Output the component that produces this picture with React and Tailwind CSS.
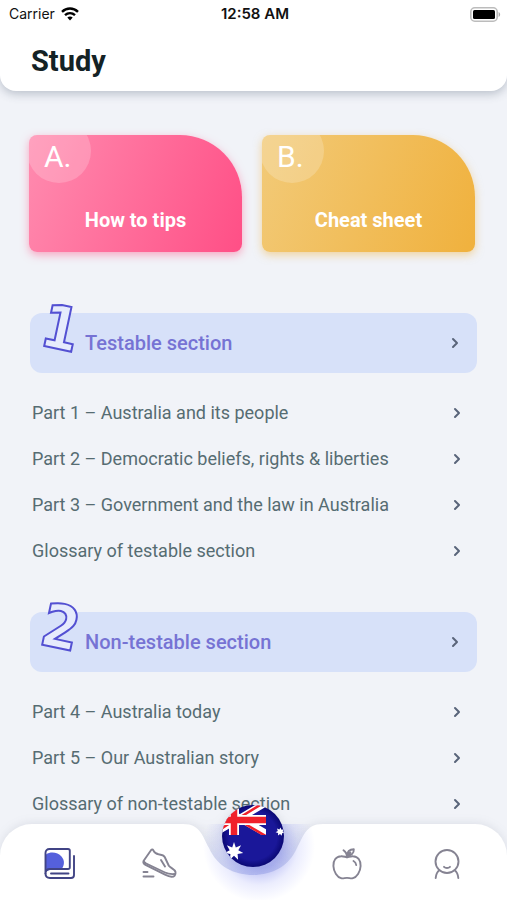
import React from "react";
import { ChevronRight } from "lucide-react";

const sections = [
  {
    number: "1",
    title: "Testable section",
    items: [
      "Part 1 – Australia and its people",
      "Part 2 – Democratic beliefs, rights & liberties",
      "Part 3 – Government and the law in Australia",
      "Glossary of testable section",
    ],
  },
  {
    number: "2",
    title: "Non-testable section",
    items: [
      "Part 4 – Australia today",
      "Part 5 – Our Australian story",
      "Glossary of non-testable section",
    ],
  },
];

function StatusBar() {
  return (
    <div className="grid h-7 grid-cols-3 items-center pl-[9px] pr-[6px] font-['Inter',sans-serif] text-[14px] leading-5 text-[#111]">
      <div className="flex items-center gap-[6px]">
        <span>Carrier</span>
        <svg width="18" height="14" viewBox="0 0 18 14" fill="none" stroke="#000" strokeWidth="2.4" aria-hidden="true">
          <path d="M1 4.8C5.5.4 12.5.4 17 4.8" />
          <path d="M4 8.2c2.9-2.7 7.100-2.700 10 0" />
          <path d="M6.300 10.500c1.500-1.500 3.900-1.500 5.400 0L9 13.400Z" fill="#000" stroke="none" />
        </svg>
      </div>
      <span className="text-center text-[15px] font-semibold">12:58 AM</span>
      <svg className="justify-self-end" width="31" height="15" viewBox="0 0 31 15" aria-hidden="true">
        <rect x=".8" y=".8" width="26.400" height="13.400" rx="4" fill="#fff" stroke="#bcbcbc" strokeWidth="1.600" />
        <rect x="3" y="3" width="22" height="9" rx="1.500" fill="#000" />
        <path d="M28.600 5v5c2-.8 2-4.200 0-5Z" fill="#aaa" />
      </svg>
    </div>
  );
}

function TopicCard({ letter, title, tone }) {
  return (
    <button
      type="button"
      className={`relative h-[117px] flex-1 overflow-visible rounded-lg rounded-tr-[62px] text-white ${tone}`}
    >
      <span className="absolute inset-0 overflow-hidden rounded-lg rounded-tr-[62px]">
        <span className="absolute -top-4 -left-[2px] size-16 rounded-full bg-white/20" />
      </span>
      <span className="absolute top-1 left-[15px] text-[30px] leading-9">{letter}</span>
      <span className="relative block pt-[52px] text-[20px] leading-6 font-bold">{title}</span>
    </button>
  );
}

function Section({ number, title, items }) {
  return (
    <section className="flex flex-col gap-[17px]">
      <h2>
        <button
          type="button"
          className="relative flex h-[60px] w-full items-center justify-between rounded-xl bg-[#d7e1f9] pr-[14px] pl-[55px] text-[20px] leading-6 font-medium text-[#7673d4]"
        >
          <span
            aria-hidden="true"
            className="absolute -top-5 left-3 rotate-12 font-['DejaVu_Sans_Condensed','DejaVu_Sans',sans-serif] text-[60px] leading-[70px] font-bold text-[#e6ebfc] [-webkit-text-stroke:2px_#5350d2]"
          >
            {number}
          </span>
          <span>{title}</span>
          <ChevronRight size={16} strokeWidth={3} className="text-[#59647a]" />
        </button>
      </h2>
      <ul>
        {items.map((item) => (
          <li key={item}>
            <a
              href="#"
              className="flex h-[46px] items-center justify-between pr-3 pl-[2px] text-[18px] leading-6 text-[#566c72]"
            >
              <span>{item}</span>
              <ChevronRight size={16} strokeWidth={3} className="text-[#59647a]" />
            </a>
          </li>
        ))}
      </ul>
    </section>
  );
}

function BookIcon() {
  return (
    <svg width="32" height="32" viewBox="0 0 32 32" fill="none" stroke="#414485" strokeWidth="1.900" strokeLinecap="round" strokeLinejoin="round" aria-hidden="true">
      <path d="M2 6.500C7 3 14 4.500 17.500 8.500c3.700 4.300 3 9.500-.5 13.500H7c-2 0-3.500.5-5 2Z" fill="#5560dc" stroke="none" />
      <path d="M5.500 1H24c1.200 0 1.800.6 1.800 1.800v16.400c0 1.200-.6 1.800-1.800 1.800H6c-3 0-4.500 1.800-4.500 4.500V5C1.500 2.500 3 1 5.500 1Z" />
      <path d="M1.500 25.500C1.500 28.200 3.200 30 6 30h21c2 0 3-1 3-3V8M7 25.500h17.500" />
    </svg>
  );
}

function ShoeIcon() {
  return (
    <svg width="36" height="32" viewBox="0 0 36 32" fill="none" stroke="#858392" strokeWidth="1.900" strokeLinecap="round" strokeLinejoin="round" aria-hidden="true">
      <path d="M2.500 13 10 2.200c.8-1 1.700-1 2.300.1 1 2 2.700 3.500 5.200 4 2.500.4 5 .4 6.200 2.700l4 8.500c1.200 2.200 6.300 3.700 6.800 6.500.5 3-1.300 4.800-4 4.700-2.500 0-4.500-1-6.500-2L4.500 16.800c-1.700-.9-2.600-2-2-3.800Z" />
      <path d="M3 13.500c.3 1 1.300 1.500 2.200 2L24 24.500c2.200 1.100 5.500 1.800 9.500 1.500M20 12l4 6.500" />
      <path d="M2.500 24h4M2.500 28.500h10" />
    </svg>
  );
}

function AppleIcon() {
  return (
    <svg width="32" height="32" viewBox="0 0 32 32" fill="none" stroke="#858392" strokeWidth="1.900" strokeLinecap="round" strokeLinejoin="round" aria-hidden="true">
      <path d="M16 9.200c-2-.3-3.600-1.200-6-1C5 8.500 2.200 12.500 2.400 18c.2 6 4 11.200 7.600 12.200 2.200.6 3.500-.3 6-.3s3.800.9 6 .3c3.600-1 7.400-6.200 7.600-12.200C29.800 12.500 27 8.500 22 8.200c-2.400-.2-4 .7-6 1Z" />
      <path d="M16 9.200c0-3-1-5.200-3.500-7M16.400 7.500c-.5-3.500 2-6.300 6.400-6.300.2 4-2.500 6.500-6.400 6.300Zm0 0 3-3M22.500 13c1.500.8 2.500 2.300 2.700 4" />
    </svg>
  );
}

function ProfileIcon() {
  return (
    <svg width="32" height="32" viewBox="0 0 32 32" fill="none" stroke="#858392" strokeWidth="1.900" strokeLinecap="round" strokeLinejoin="round" aria-hidden="true">
      <circle cx="16" cy="13.500" r="11.500" />
      <path d="M13 18.800c1.500 1.500 4.500 1.500 6 0M8.300 22.200C6.200 23.800 5 26.500 4.700 30M23.700 22.200c2.100 1.600 3.300 4.300 3.600 7.800" />
    </svg>
  );
}

function AustraliaFlag() {
  return (
    <svg width="64" height="64" viewBox="0 0 64 64" className="block" aria-hidden="true">
      <defs>
        <clipPath id="flag-disc">
          <circle cx="32" cy="32" r="31" />
        </clipPath>
        <clipPath id="flag-canton">
          <rect width="45" height="31" />
        </clipPath>
        <radialGradient id="flag-shade">
          <stop offset=".75" stopColor="#1a1799" />
          <stop offset="1" stopColor="#08066e" />
        </radialGradient>
      </defs>
      <g clipPath="url(#flag-disc)">
        <rect width="64" height="64" fill="url(#flag-shade)" />
        <g clipPath="url(#flag-canton)">
          <path d="M-18 36 46-2M-16-6 46 30" stroke="#fff" strokeWidth="7" />
          <path d="M13 17 44-2M14 14l34 20M-8 30l20-13" stroke="#f0202b" strokeWidth="2.500" />
          <path d="M-2 16h50M13-4v36" stroke="#fff" strokeWidth="10" />
          <path d="M-2 16h50M13-4v36" stroke="#f0202b" strokeWidth="6.500" />
        </g>
        <path
          d="m13 38 1.800 5.400 5.300-2.200-2.800 5 5 2.800-5.700 1 .5 5.700-4.100-4-4.100 4 .5-5.700-5.700-1 5-2.800-2.800-5 5.300 2.200Z"
          fill="#fff"
        />
        <path d="m59.500 23.500 1 2.300 2.500-.6-1.400 2.100 1.900 1.700-2.500.3-.2 2.500-1.800-1.800-2 1.500.1-2.500-2.500-.8 2.200-1.300-.8-2.300 2.400.8Z" fill="#fff" />
      </g>
    </svg>
  );
}

function TabBar() {
  return (
    <nav aria-label="Main" className="absolute inset-x-0 bottom-0 flex h-[76px] drop-shadow-[0_-1px_5px_rgba(70,80,110,0.12)]">
      <div className="flex flex-1 items-start justify-between rounded-tl-[32px] bg-white pt-6 pr-[6px] pl-11">
        <button type="button" aria-label="Study"><BookIcon /></button>
        <button type="button" aria-label="Practice"><ShoeIcon /></button>
      </div>
      <div className="relative w-[140px]">
        <svg width="140" height="76" viewBox="0 0 140 76" className="block" aria-hidden="true">
          <defs>
            <linearGradient id="notch-shade" x1="0" y1="0" x2="0" y2="1">
              <stop offset="0" stopColor="#e4e8f1" stopOpacity="0" />
              <stop offset="1" stopColor="#cfd5f0" />
            </linearGradient>
            <radialGradient id="glow">
              <stop offset=".4" stopColor="#6a72e6" stopOpacity=".45" />
              <stop offset=".7" stopColor="#7c86f5" stopOpacity=".15" />
              <stop offset="1" stopColor="#7c86ff" stopOpacity="0" />
            </radialGradient>
          </defs>
          <path d="M0 0C18 0 20 14 26 24C34 42 50 51 70 51S106 42 114 24C120 14 122 0 140 0Z" fill="url(#notch-shade)" />
          <path d="M0 0C18 0 20 14 26 24C34 42 50 51 70 51S106 42 114 24C120 14 122 0 140 0V76H0Z" fill="#fff" />
          <circle cx="76" cy="22" r="56" fill="url(#glow)" />
        </svg>
        <button type="button" aria-label="Australian citizenship test" className="absolute -top-5 left-[38px] rounded-full">
          <AustraliaFlag />
        </button>
      </div>
      <div className="flex flex-1 items-start justify-between rounded-tr-[32px] bg-white pt-6 pr-11 pl-2">
        <button type="button" aria-label="Health"><AppleIcon /></button>
        <button type="button" aria-label="Profile"><ProfileIcon /></button>
      </div>
    </nav>
  );
}

export default function App() {
  return (
    <div className="relative flex h-screen flex-col overflow-hidden bg-[#f1f3f8] font-['Roboto',sans-serif]">
      <header className="z-10 shrink-0 rounded-b-2xl bg-white pb-[13px] shadow-[0_3px_10px_rgba(60,75,100,0.3)]">
        <StatusBar />
        <h1 className="px-[31px] pt-4 text-[29px] leading-[34px] font-bold text-[#142225]">Study</h1>
      </header>
      <main className="flex-1 overflow-y-auto pt-11 [scrollbar-width:none]">
        <div className="flex gap-5 pr-8 pl-[29px]">
          <TopicCard
            letter="A."
            title="How to tips"
            tone="bg-linear-[110deg,#ff8baf,#ff4f86] shadow-[0_3px_8px_rgba(255,90,140,0.5)]"
          />
          <TopicCard
            letter="B."
            title="Cheat sheet"
            tone="bg-linear-[110deg,#f2ca78,#f0b13d] shadow-[0_3px_8px_rgba(240,180,70,0.5)]"
          />
        </div>
        <div className="flex flex-col gap-[38px] px-[30px] pt-[61px] pb-24">
          {sections.map((section) => (
            <Section key={section.number} {...section} />
          ))}
        </div>
      </main>
      <TabBar />
    </div>
  );
}
